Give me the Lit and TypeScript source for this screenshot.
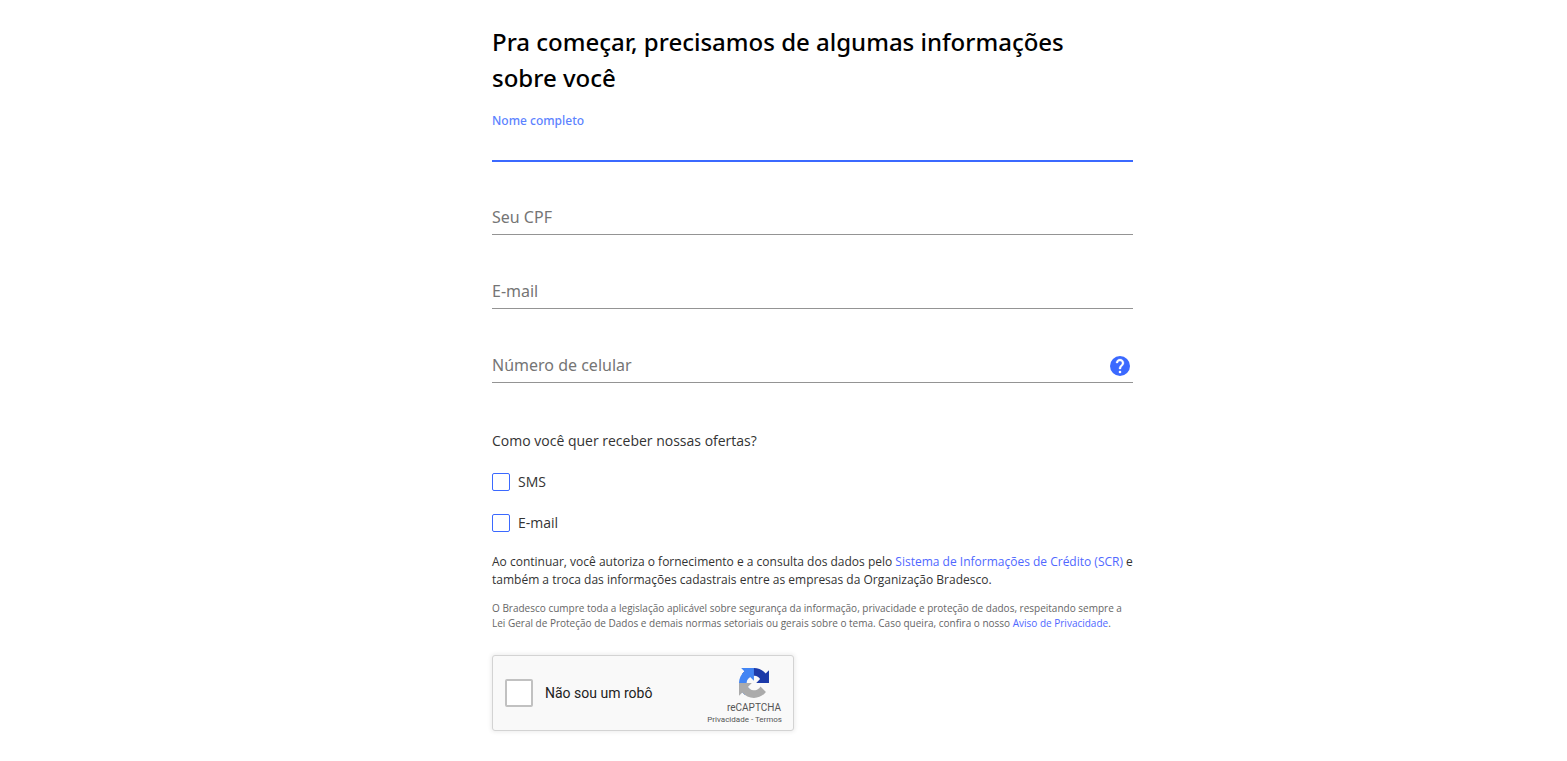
import { LitElement, html, css, nothing } from "lit";
import { customElement, property } from "lit/decorators.js";

@customElement("text-field")
class TextField extends LitElement {
  @property() label = "";
  @property() type = "text";
  @property({ type: Boolean, reflect: true }) floating = false;
  @property({ type: Boolean }) help = false;

  static styles = css`
    :host {
      display: block;
      font-family: "Noto Sans", sans-serif;
    }
    .field {
      display: grid;
      grid-template-columns: 1fr auto;
      align-items: center;
      height: 33px;
      padding-top: 40px;
      border-bottom: 1px solid #949494;
    }
    .label {
      grid-area: 1 / 1;
      padding-bottom: 2px;
      font-size: 16px;
      line-height: 24px;
      color: #757575;
      pointer-events: none;
    }
    .input {
      grid-area: 1 / 1;
      width: 100%;
      height: 32px;
      box-sizing: border-box;
      border: 0;
      padding: 0;
      outline: 0;
      background: none;
      font: 16px "Noto Sans", sans-serif;
    }
    .help {
      grid-area: 1 / 2;
      display: flex;
      border: 0;
      padding: 0;
      margin-right: 1px;
      background: none;
      cursor: pointer;
    }
    :host([floating]) .field {
      grid-template-columns: 1fr;
      height: 48px;
      padding-top: 2px;
      align-content: start;
      align-items: start;
      border-bottom: 2px solid #3b69ff;
      margin-bottom: -1px;
    }
    :host([floating]) .label {
      padding: 0;
      font-size: 12px;
      line-height: 18px;
      font-weight: 500;
      color: #5c83ff;
    }
    :host([floating]) .input {
      grid-area: 2 / 1;
      height: 30px;
    }
  `;

  render() {
    return html`
      <div class="field">
        <label class="label" for="control">${this.label}</label>
        <input class="input" id="control" type=${this.type} />
        ${this.help
          ? html`<button class="help" type="button" aria-label="Ajuda">
              <svg width="24" height="24" viewBox="0 0 24 24">
                <circle cx="12" cy="12" r="10" fill="#3b69ff" />
                <path fill="#fff" stroke="#fff" stroke-width=".3" d="M13 19h-2v-2h2v2zM15.070 11.250l-.9.92C13.45 12.9 13 13.5 13 15h-2v-.5c0-1.1.45-2.1 1.17-2.83l1.24-1.26c.37-.36.59-.86.59-1.41 0-1.1-.9-2-2-2s-2 .9-2 2H8c0-2.21 1.79-4 4-4s4 1.79 4 4c0 .88-.36 1.680-.93 2.250z" />
              </svg>
            </button>`
          : nothing}
      </div>
    `;
  }
}

@customElement("captcha-box")
class CaptchaBox extends LitElement {
  static styles = css`
    :host {
      display: block;
    }
    .box {
      display: flex;
      align-items: center;
      justify-content: space-between;
      width: 302px;
      height: 76px;
      box-sizing: border-box;
      padding: 0 11px 0 12px;
      border: 1px solid #d3d3d3;
      border-radius: 3px;
      background: #f9f9f9;
      box-shadow: 0 0 4px 1px rgba(0, 0, 0, 0.08);
      font-family: Roboto, sans-serif;
    }
    .check {
      display: flex;
      align-items: center;
      gap: 12px;
      font-size: 14px;
      line-height: 17px;
      color: #222;
    }
    .tick {
      appearance: none;
      width: 28px;
      height: 28px;
      margin: 0;
      border: 2px solid #c1c1c1;
      border-radius: 2px;
      background: #fff;
    }
    .brand {
      display: flex;
      flex-direction: column;
      align-items: flex-end;
      padding-top: 8px;
      color: #555;
    }
    .logo {
      margin-right: 13px;
    }
    .name {
      margin-top: 4px;
      margin-right: 1px;
      font-size: 10px;
      line-height: 12px;
    }
    .links {
      font-size: 8px;
      line-height: 12px;
    }
    .link {
      color: #555;
      text-decoration: none;
    }
  `;

  render() {
    return html`
      <div class="box">
        <label class="check"><input class="tick" type="checkbox" />Não sou um robô</label>
        <div class="brand">
          <svg class="logo" width="30" height="30" viewBox="0 0 64 64">
            <path fill="#1c3aa9" d="M64 31.955l-.033-1.37V4.687l-7.16 7.16C50.948 4.674 42.033.093 32.05.093c-10.4 0-19.622 4.96-25.458 12.64l11.736 11.86a15.55 15.55 0 0 1 4.754-5.334c2.05-1.6 4.952-2.906 8.968-2.906.485 0 .86.057 1.135.163 4.976.393 9.288 3.14 11.828 7.124l-8.307 8.307L64 31.953" />
            <path fill="#4285f4" d="M31.862.094l-1.37.033H4.594l7.16 7.16C4.58 13.147 0 22.06 0 32.046c0 10.4 4.96 19.622 12.64 25.458L24.5 45.768a15.55 15.55 0 0 1-5.334-4.754c-1.6-2.05-2.906-4.952-2.906-8.968 0-.485.057-.86.163-1.135.393-4.976 3.14-9.288 7.124-11.828l8.307 8.307L31.86.095" />
            <path fill="#ababab" d="M.001 32.045l.033 1.37v25.898l7.16-7.16c5.86 7.173 14.774 11.754 24.76 11.754 10.4 0 19.622-4.96 25.458-12.64l-11.736-11.86a15.55 15.55 0 0 1-4.754 5.334c-2.05 1.6-4.952 2.906-8.968 2.906-.485 0-.86-.057-1.135-.163-4.976-.393-9.288-3.14-11.828-7.124l8.307-8.307L0 32.047" />
          </svg>
          <div class="name">reCAPTCHA</div>
          <div class="links"><a class="link" href="#">Privacidade</a> - <a class="link" href="#">Termos</a></div>
        </div>
      </div>
    `;
  }
}

@customElement("app-root")
class AppRoot extends LitElement {
  static styles = css`
    :host {
      display: block;
      min-height: 100vh;
      background: #fff;
      color: #333;
      font-family: "Open Sans", "Noto Sans", sans-serif;
    }
    .page {
      display: grid;
      grid-template-columns: 492fr 641fr 434fr;
    }
    .form {
      grid-column: 2;
      padding: 24px 0 28px;
    }
    .title {
      margin: 0;
      font-family: "Noto Sans", sans-serif;
      font-size: 24px;
      line-height: 36px;
      font-weight: 500;
      color: #000;
    }
    .fields {
      display: flex;
      flex-direction: column;
      margin-top: 14px;
    }
    .offers {
      margin: 46px 0 0;
      padding: 0;
      border: 0;
      display: flex;
      flex-direction: column;
    }
    .question {
      padding: 0;
      font-size: 14px;
      line-height: 24px;
    }
    .option {
      display: flex;
      align-items: center;
      gap: 8px;
      margin-top: 17px;
      font-size: 14px;
      line-height: 24px;
    }
    .box {
      appearance: none;
      width: 18px;
      height: 18px;
      margin: 0;
      border: 1px solid #3b69ff;
      border-radius: 2px;
    }
    .terms {
      margin: 18px 0 0;
      font-size: 12px;
      line-height: 18px;
    }
    .privacy {
      margin: 12px 0 24px;
      font-size: 10px;
      line-height: 15px;
      color: #666;
    }
    .link {
      color: #5068ff;
      text-decoration: none;
    }
  `;

  render() {
    return html`
      <main class="page">
        <form class="form">
          <h1 class="title">Pra começar, precisamos de algumas informações sobre você</h1>
          <div class="fields">
            <text-field label="Nome completo" floating></text-field>
            <text-field label="Seu CPF"></text-field>
            <text-field label="E-mail" type="email"></text-field>
            <text-field label="Número de celular" type="tel" help></text-field>
          </div>
          <fieldset class="offers">
            <legend class="question">Como você quer receber nossas ofertas?</legend>
            <label class="option"><input class="box" type="checkbox" />SMS</label>
            <label class="option"><input class="box" type="checkbox" />E-mail</label>
          </fieldset>
          <p class="terms">
            Ao continuar, você autoriza o fornecimento e a consulta dos dados pelo
            <a class="link" href="#">Sistema de Informações de Crédito (SCR)</a> e também a troca
            das informações cadastrais entre as empresas da Organização Bradesco.
          </p>
          <p class="privacy">
            O Bradesco cumpre toda a legislação aplicável sobre segurança da informação, privacidade
            e proteção de dados, respeitando sempre a Lei Geral de Proteção de Dados e demais normas
            setoriais ou gerais sobre o tema. Caso queira, confira o nosso
            <a class="link" href="#">Aviso de Privacidade</a>.
          </p>
          <captcha-box></captcha-box>
        </form>
      </main>
    `;
  }
}
